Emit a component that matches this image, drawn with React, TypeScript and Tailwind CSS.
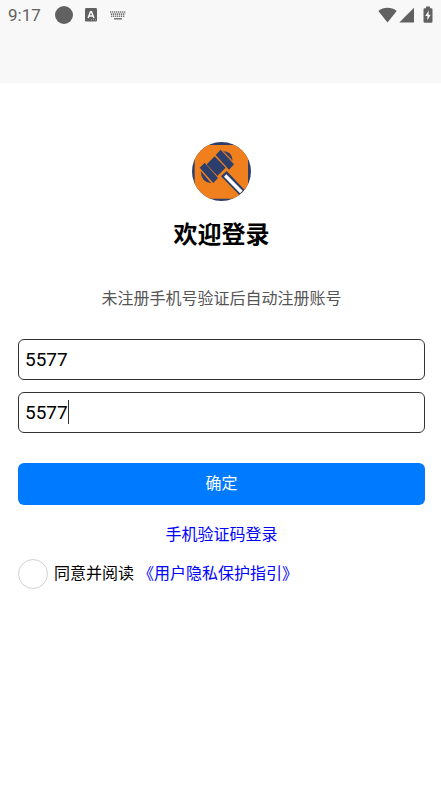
import { useState } from "react";

function StatusBar() {
  return (
    <div className="flex h-[30px] items-center justify-between pl-2 pr-2 text-[#616161]">
      <div className="flex items-center">
        <span className="w-[47px] text-[17px] leading-5">9:17</span>
        <span className="size-[18px] rounded-full bg-[#616161]" />
        <svg className="ml-3 h-[14px] w-3" viewBox="0 0 12 14" fill="none" aria-hidden="true">
          <rect width="12" height="13.4" rx="1.2" fill="#616161" />
          <path d="M3.1 10 5.5 3.8h1L8.9 10M4 7.9h4" stroke="#f8f8f8" strokeWidth="1.5" />
          <path d="M6 11.8h1M8 11.8h1M10 11.8h1" stroke="#c8c8c8" strokeWidth=".8" />
        </svg>
        <svg className="ml-[13px] h-[9px] w-4" viewBox="0 0 16 9" fill="none" stroke="#777" aria-hidden="true">
          <path d="M0 1h16" strokeWidth="1.6" strokeDasharray="1.3 .7" />
          <path d="M.8 3.1h14.4" strokeWidth="1.6" strokeDasharray="1.3 .7" />
          <path d="M1 5.2h14" strokeWidth="1.6" strokeDasharray="1.3 .7" />
          <path d="M4 7.8h8" strokeWidth="1.5" />
        </svg>
      </div>
      <div className="flex items-center pb-px">
        <svg className="h-4 w-[19px]" viewBox="0 0 19 16" fill="#616161" aria-hidden="true">
          <path d="M9.5 15.4.3 4C3 1.8 6 .7 9.5.7S16 1.8 18.7 4z" />
        </svg>
        <svg className="ml-[2px] h-4 w-4" viewBox="0 0 16 16" fill="#616161" aria-hidden="true">
          <path d="M15 .8v14.6H.3z" />
        </svg>
        <svg className="ml-[8px] h-[17px] w-[10px]" viewBox="0 0 10 17" aria-hidden="true">
          <path
            d="M3 .5h4v1.7h1.2q1.3 0 1.3 1.3v12q0 1.3-1.3 1.3H1.8Q.5 16.800.5 15.500v-12q0-1.3 1.300-1.3H3z"
            fill="#616161"
          />
          <path d="M5.600 4.500 2.300 10h2.100v4.300L7.700 8.800H5.600z" fill="#f8f8f8" />
        </svg>
      </div>
    </div>
  );
}

function GavelLogo() {
  return (
    <svg className="size-[59px]" viewBox="36 36 177 177" role="img" aria-label="logo">
      <defs>
        <clipPath id="disc">
          <circle cx="124.5" cy="124.5" r="88.5" />
        </clipPath>
      </defs>
      <g clipPath="url(#disc)">
        <rect x="36" y="36" width="177" height="177" fill="#2c3e6b" />
        <rect x="44" y="45" width="160" height="161" rx="3" fill="#f07f1d" />
        <g fill="#2c3e6b">
          <path d="M104 79 137 113 112 138 79 104z" />
          <path d="M122 59 162 103 147 119 107 75z" />
          <path d="M74 98 114 144 100 159 59 113z" />
          <path d="M129 63Q156 63 158 94z" />
          <path d="M62 122Q63 156 94 160z" />
          <path d="M140 123 194 180 179 196 123 139z" />
        </g>
        <path d="M139 133 188 182 180 190 132 140z" fill="#fff" />
        <path d="M105 76 139 113M77 101 114 141M131 63 161 96M60 119 92 156" stroke="#f07f1d" strokeWidth="1.6" />
      </g>
    </svg>
  );
}

const field =
  "block h-[41px] w-full rounded-md border border-[#333] bg-white px-1.5 text-[19px] text-black caret-transparent outline-none";

export default function App() {
  const [account, setAccount] = useState("5577");
  const [password, setPassword] = useState("5577");

  return (
    <div className="min-h-screen bg-white font-[Roboto,'Noto_Sans_CJK_SC',sans-serif] text-black">
      <header className="h-[83px] bg-[#f8f8f8]">
        <StatusBar />
      </header>
      <main className="flex flex-col pl-[18px] pr-4 pt-[59px]">
        <div className="flex flex-col items-center">
          <GavelLogo />
          <h1 className="mt-[18px] text-2xl font-bold leading-8">欢迎登录</h1>
          <p className="mt-9 text-base leading-6 text-[#555]">未注册手机号验证后自动注册账号</p>
        </div>
        <form className="mt-7" onSubmit={(e) => e.preventDefault()}>
          <input
            className={field}
            type="text"
            aria-label="账号"
            value={account}
            onChange={(e) => setAccount(e.target.value)}
          />
          <div className="relative mt-3">
            <input
              className={field}
              type="text"
              aria-label="密码"
              value={password}
              onChange={(e) => setPassword(e.target.value)}
            />
            <span className="absolute left-[50px] top-2 h-6 w-px bg-[#333]" />
          </div>
          <button type="submit" className="mt-[30px] block h-[42px] w-full rounded-md bg-[#007aff] text-base text-white">
            确定
          </button>
          <div className="mt-[18px] text-center leading-6">
            <a href="#sms" className="text-base text-[#0000ff]">
              手机验证码登录
            </a>
          </div>
          <div className="mt-3 flex items-center text-base leading-6">
            <input
              id="agree"
              type="checkbox"
              className="size-[30px] shrink-0 appearance-none rounded-full border border-[#d1d1d1] bg-white"
            />
            <label htmlFor="agree" className="ml-1.5">
              同意并阅读
            </label>
            <a href="#privacy" className="ml-1 text-[#0000ff]">
              《用户隐私保护指引》
            </a>
          </div>
        </form>
      </main>
    </div>
  );
}
